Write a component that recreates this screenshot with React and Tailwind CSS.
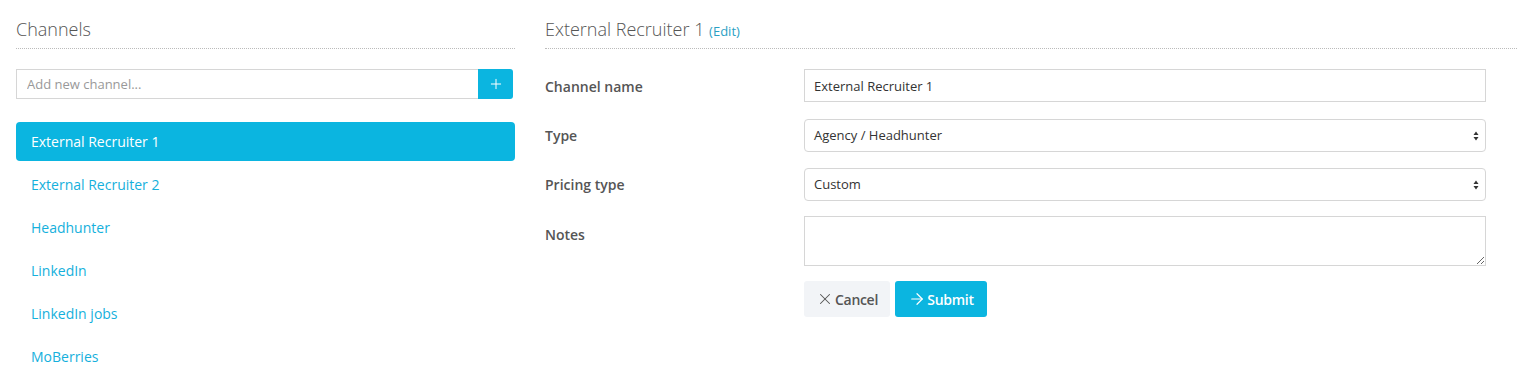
import { Plus, X, ArrowRight } from 'lucide-react'

const CHANNELS = [
  'External Recruiter 1',
  'External Recruiter 2',
  'Headhunter',
  'LinkedIn',
  'LinkedIn jobs',
  'MoBerries',
]

function Chevrons() {
  return (
    <svg width="6" height="10" viewBox="0 0 6 10" className="absolute right-[6px] top-1/2 -translate-y-1/2">
      <path d="M3 0.5 L5.5 4 H0.5 Z" fill="#333" />
      <path d="M3 9.5 L5.5 6 H0.5 Z" fill="#333" />
    </svg>
  )
}

function Row({ label, children, top = 'pt-[8px]' }) {
  return (
    <div className="flex">
      <div className={`w-[259px] shrink-0 text-[14px] font-semibold text-[#555] ${top}`}>{label}</div>
      <div className="w-[682px]">{children}</div>
    </div>
  )
}

export default function App() {
  const active = 'External Recruiter 1'

  return (
    <div className="flex gap-[30px] bg-white pl-4 pr-[2px] pt-[16px] font-['Open_Sans',sans-serif] text-[#555]">
      {/* Channels list */}
      <div className="w-[499px] shrink-0">
        <h2 className="text-[18px] font-light leading-[26px] text-[#555]">Channels</h2>
        <div className="mt-[6px] border-b border-dotted border-[#bbb]" />
        <div className="mr-[2px] mt-[20px] flex h-[30px]">
          <input
            placeholder="Add new channel..."
            className="h-full flex-1 border border-[#d6d6d6] border-r-0 px-[10px] text-[13px] text-[#555] outline-none placeholder:text-[#999]"
          />
          <button type="button" className="flex h-full w-[35px] items-center justify-center rounded-r-[3px] bg-[#0bb5e0] text-white">
            <Plus size={16} strokeWidth={1.5} />
          </button>
        </div>
        <div className="mt-[23px] space-y-[4px]">
          {CHANNELS.map((c) => (
            <div
              key={c}
              className={`flex h-[39px] items-center rounded-[4px] px-[15px] text-[14px] ${
                c === active ? 'bg-[#0bb5e0] text-white' : 'text-[#15b0dc]'
              }`}
            >
              {c}
            </div>
          ))}
        </div>
      </div>

      {/* Edit form */}
      <div className="flex-1">
        <h2 className="h-[26px] text-[18px] font-light leading-[26px] text-[#555]">
          External Recruiter 1 <span className="text-[13px] font-normal leading-none text-[#2a9fc4]">(Edit)</span>
        </h2>
        <div className="mt-[6px] border-b border-dotted border-[#bbb]" />

        <div className="mt-[20px]">
          <Row label="Channel name" top="pt-[7px]">
            <input
              defaultValue="External Recruiter 1"
              className="h-[33px] w-full border border-[#d6d6d6] px-[9px] text-[13px] text-[#333] outline-none"
            />
          </Row>
          <div className="mt-[17px]">
            <Row label="Type" top="pt-[6px]">
              <div className="relative flex h-[33px] items-center rounded-[4px] border border-[#d6d6d6] px-[9px] text-[13px] text-[#333]">
                Agency / Headhunter
                <Chevrons />
              </div>
            </Row>
          </div>
          <div className="mt-[16px]">
            <Row label="Pricing type" top="pt-[6px]">
              <div className="relative flex h-[33px] items-center rounded-[4px] border border-[#d6d6d6] px-[9px] text-[13px] text-[#333]">
                Custom
                <Chevrons />
              </div>
            </Row>
          </div>
          <div className="mt-[15px]">
            <Row label="Notes" top="pt-[8px]">
              <textarea className="block h-[50px] w-full border border-[#d6d6d6] px-[9px] text-[13px] outline-none" />
            </Row>
          </div>
          <div className="mt-[15px] flex">
            <div className="w-[259px] shrink-0" />
            <div className="flex gap-[5px]">
              <button type="button" className="flex h-[36px] w-[86px] items-center justify-center gap-[1px] rounded-[3px] bg-[#f2f4f7] text-[14px] font-semibold tracking-[-0.3px] text-[#555]">
                <X size={18} strokeWidth={1.4} />
                Cancel
              </button>
              <button type="button" className="flex h-[36px] w-[92px] items-center justify-center gap-[1px] rounded-[3px] bg-[#0bb5e0] text-[14px] font-semibold tracking-[-0.3px] text-white">
                <ArrowRight size={18} strokeWidth={1.6} />
                Submit
              </button>
            </div>
          </div>
        </div>
      </div>
    </div>
  )
}
